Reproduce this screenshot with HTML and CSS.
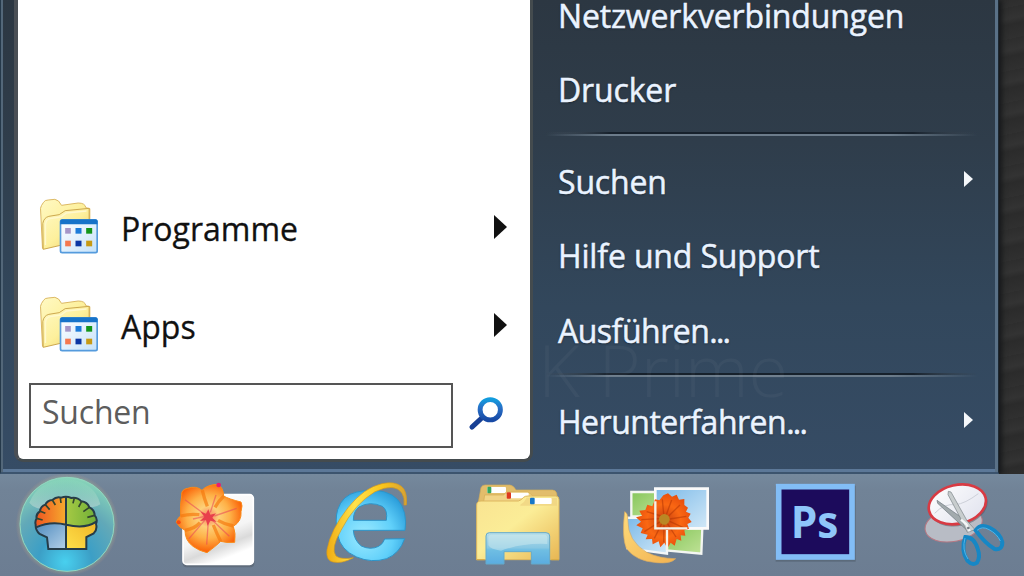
FILE: index.html
```html
<!DOCTYPE html>
<html lang="de">
  <head>
    <meta charset="utf-8">
    <title>Start</title>
    <link rel="stylesheet" href="styles.css">
  </head>
  <body>
    <svg class="defs" width="0" height="0">
      <defs>
        <linearGradient id="paper" x1="0" y1="0" x2="1" y2="1"><stop offset="0" stop-color="#fff9c4"/><stop offset=".5" stop-color="#fdf09c"/><stop offset="1" stop-color="#edc95e"/></linearGradient>
        <linearGradient id="pane" x1="0" y1="0" x2="1" y2="1"><stop offset="0" stop-color="#fff"/><stop offset="1" stop-color="#c5e2fa"/></linearGradient>
        <symbol id="folder" viewBox="115 45 185 180">
          <path d="M122 82 Q123 75 131 64 Q135 57 145 57 L165 55 Q177 56 185 73 L235 66 Q256 66 258 80 L270 83 L270 130 L182 190 L128 202Z" fill="url(#paper)" stroke="#dcb965" stroke-width="3"/>
          <path d="M130 205 L129 127 Q132 110 147 106 L178 101 L196 89 L268 82 L268 132 L182 193Z" fill="url(#paper)" stroke="#cda84e" stroke-width="3"/>
          <path d="M137 192 V130 Q139 115 151 113 L183 108 L200 96 L260 90" fill="none" stroke="#fff8cf" stroke-width="4"/>
          <rect x="182" y="117" width="110" height="98" rx="5" fill="url(#pane)" stroke="#559bdd" stroke-width="5"/>
          <path d="M181 130 V120 Q181 115 187 115 H287 Q293 115 293 121 V130Z" fill="#1673c9"/>
          <path d="M196 141h17v17h-17z" fill="#a596c8"/>
          <path d="M227 141h18v17h-18z" fill="#1c7bd9"/>
          <path d="M259 141h18v17h-18z" fill="#13951a"/>
          <path d="M196 179h17v17h-17z" fill="#f5784f"/>
          <path d="M227 179h18v17h-18z" fill="#0a36a4"/>
          <path d="M259 179h18v17h-18z" fill="#c79a15"/>
        </symbol>
      </defs>
    </svg>

    <div class="desktop">
      <div class="menu">
        <div class="programs">
          <div class="entry">
            <svg class="folder"><use href="#folder"/></svg>
            <span class="label">Programme</span>
            <span class="arrow"></span>
          </div>
          <div class="entry">
            <svg class="folder"><use href="#folder"/></svg>
            <span class="label">Apps</span>
            <span class="arrow"></span>
          </div>
          <div class="search">
            <input class="field" type="text" placeholder="Suchen">
            <svg class="lens" viewBox="110 78 110 108">
              <defs><linearGradient id="ring" x1="0" y1="0" x2="0" y2="1"><stop offset="0" stop-color="#129bdd"/><stop offset=".4" stop-color="#2870c7"/><stop offset="1" stop-color="#174aa5"/></linearGradient></defs>
              <path d="M150 146 L122 172" stroke="#173f94" stroke-width="15" stroke-linecap="round"/>
              <circle cx="178" cy="119" r="31" fill="#fff" stroke="url(#ring)" stroke-width="15"/>
            </svg>
          </div>
        </div>

        <div class="places">
          <div class="item">Netzwerkverbindungen</div>
          <div class="item">Drucker</div>
          <div class="line"></div>
          <div class="item">Suchen<span class="arrow"></span></div>
          <div class="item">Hilfe und Support</div>
          <div class="item tight"><span>Ausführen<span class="dots">...</span></span></div>
          <div class="line"></div>
          <div class="item tight"><span>Herunterfahren<span class="dots">...</span></span><span class="arrow"></span></div>
          <div class="watermark">K Prime</div>
        </div>
      </div>
    </div>

    <div class="taskbar">
      <!-- start orb -->
      <svg class="task" viewBox="-27 12 450 306">
        <defs>
          <radialGradient id="orb" cx=".48" cy=".9" r=".95"><stop offset="0" stop-color="#48d0ef"/><stop offset=".3" stop-color="#3c9fc6"/><stop offset=".62" stop-color="#62a9b8"/><stop offset="1" stop-color="#8edcb9"/></radialGradient>
          <radialGradient id="halo"><stop offset=".86" stop-color="#7ae5b5" stop-opacity=".6"/><stop offset="1" stop-color="#d4957b" stop-opacity="0"/></radialGradient>
          <linearGradient id="gloss" x1="0" y1="0" x2="0" y2="1"><stop offset="0" stop-color="#8edcba" stop-opacity=".2"/><stop offset="1" stop-color="#d5e1dc" stop-opacity=".5"/></linearGradient>
          <linearGradient id="red"><stop offset="0" stop-color="#ee4e20"/><stop offset="1" stop-color="#f6ac2e"/></linearGradient>
          <linearGradient id="green"><stop offset="0" stop-color="#a5c944"/><stop offset="1" stop-color="#6aac36"/></linearGradient>
          <linearGradient id="blue" x1="0" y1="0" x2="1" y2="1"><stop offset="0" stop-color="#4b88bd"/><stop offset="1" stop-color="#b9d4ea"/></linearGradient>
          <linearGradient id="gold" x1="0" y1="1" x2="1" y2="0"><stop offset="0" stop-color="#ffe34c"/><stop offset="1" stop-color="#eeb225"/></linearGradient>
          <clipPath id="shell"><path d="M107 164 Q104 155 110 145 Q107 132 120 124 Q121 109 136 104 Q142 91 157 90 Q170 78 184 83 Q198 77 214 84 Q232 81 244 94 Q262 96 268 112 Q284 120 284 136 Q294 146 288 162 Q293 178 281 190 L259 201 V237 H145 L141 202 L119 192 Q106 180 107 164Z"/></clipPath>
        </defs>
        <circle cx="201" cy="163" r="154" fill="url(#halo)"/>
        <circle cx="201" cy="163" r="141" fill="url(#orb)" stroke="#93d7bf" stroke-width="3"/>
        <path d="M88 98 Q115 31 201 28 Q283 34 301 103 Q273 121 200 110 Q112 130 88 98Z" fill="url(#gloss)"/>
        <g clip-path="url(#shell)">
          <path d="M100 70 H199 V165 Q151 150 108 172Z" fill="url(#red)"/>
          <path d="M199 70 H300 V155 Q255 178 199 163Z" fill="url(#green)"/>
          <path d="M100 172 Q151 150 199 163 V245 H100Z" fill="url(#blue)"/>
          <path d="M199 163 Q255 178 300 155 V245 H199Z" fill="url(#gold)"/>
        </g>
        <path d="M107 164 Q104 155 110 145 Q107 132 120 124 Q121 109 136 104 Q142 91 157 90 Q170 78 184 83 Q198 77 214 84 Q232 81 244 94 Q262 96 268 112 Q284 120 284 136 Q294 146 288 162 Q293 178 281 190 L259 201 V237 H145 L141 202 L119 192 Q106 180 107 164Z" fill="none" stroke="#263c48" stroke-width="6"/>
        <path d="M198 82 V238 M108 172 Q151 152 199 164 Q255 178 289 155" fill="none" stroke="#263c48" stroke-width="6"/>
        <path d="M110 145 L128 150 M119 123 L136 130 M136 104 L149 119 M157 90 L166 105 M181 84 L183 99 M223 84 L219 100 M245 94 L236 111 M268 112 L250 125 M284 136 L262 142" stroke="#33462f" stroke-width="5"/>
      </svg>

      <!-- flower -->
      <svg class="task" viewBox="423 12 450 306">
        <defs>
          <radialGradient id="petal" gradientUnits="userSpaceOnUse" cx="625" cy="140" r="105"><stop offset="0" stop-color="#f77962"/><stop offset=".3" stop-color="#fdd078"/><stop offset=".62" stop-color="#feb147"/><stop offset="1" stop-color="#fa6309"/></radialGradient>
          <linearGradient id="card" x1="0" y1="0" x2=".4" y2="1"><stop offset="0" stop-color="#fff"/><stop offset=".65" stop-color="#f5f5f5"/><stop offset=".83" stop-color="#dadada"/><stop offset="1" stop-color="#fff"/></linearGradient>
        </defs>
        <rect x="548" y="78" width="215" height="214" rx="12" fill="#56606d" opacity=".6"/>
        <rect x="549" y="74" width="211" height="209" rx="11" fill="url(#card)" stroke="#fff" stroke-width="5"/>
        <path d="M545 76 Q543 58 563 55 Q588 46 606 61 Q621 44 653 43 Q670 52 671 78 Q686 87 723 96 Q729 105 723 125 Q726 153 700 169 Q708 189 704 217 Q679 219 662 214 Q648 228 621 248 Q596 242 579 229 Q555 212 555 181 Q538 173 529 157 Q531 145 542 138 Q540 104 545 76Z" fill="url(#petal)" stroke="#fa8b18" stroke-width="3"/>
        <path d="M607 61 Q612 83 622 109 M671 79 Q655 94 645 112 M700 168 Q674 163 654 151 M662 214 Q650 190 640 165 M555 181 Q585 176 600 158 M542 138 Q568 131 598 134" fill="none" stroke="#f4760a" stroke-width="10" opacity=".65"/>
        <path d="M555 89 L614 133 M648 75 L631 127 M710 115 L643 138 M688 199 L637 151 M620 224 L625 153 M567 206 L614 151 M579 147 L614 139" stroke="#e94658" stroke-width="4" opacity=".55"/>
        <path d="M625 118 L631 134 L648 130 L637 143 L650 156 L631 152 L623 167 L618 151 L600 153 L613 140 L602 125 L618 131Z" fill="#e8404c"/>
        <circle cx="656" cy="45" r="7" fill="#e91d70"/>
        <circle cx="536" cy="157" r="6" fill="#f64b13"/>
      </svg>

      <!-- browser -->
      <svg class="task" viewBox="-27 12 450 306">
        <defs>
          <radialGradient id="letter" cx=".4" cy=".65" r=".7"><stop offset="0" stop-color="#9ceaff"/><stop offset=".6" stop-color="#60d0fa"/><stop offset="1" stop-color="#2b9edb"/></radialGradient>
          <linearGradient id="swoosh" x1="0" y1="0" x2="1" y2="0"><stop offset="0" stop-color="#f0ac12"/><stop offset=".35" stop-color="#ffe34b"/><stop offset=".7" stop-color="#fac51b"/><stop offset="1" stop-color="#d6a235"/></linearGradient>
        </defs>
        <path fill-rule="evenodd" d="M315 181 H160 Q162 211 184 228 Q211 241 236 229 Q249 222 254 207 L314 206 Q299 250 260 266 Q214 280 170 261 Q122 240 113 195 Q104 149 113 119 Q127 76 170 66 Q231 51 276 75 Q315 99 317 156Z M160 151 H259 Q264 120 247 109 Q210 92 177 111 Q160 123 160 151Z" fill="url(#letter)" stroke="#2e94c8" stroke-width="3"/>
        <path d="M319 105 Q323 64 304 49 Q284 33 246 41 Q193 52 144 113 Q92 179 81 239 Q77 272 99 276 Q126 282 160 263 Q124 270 108 258 Q91 236 123 181 Q164 101 225 65 Q285 37 306 70 Q315 83 312 105Z" fill="url(#swoosh)" stroke="#d99a17" stroke-width="2"/>
      </svg>

      <!-- file manager -->
      <svg class="task" viewBox="423 12 450 306">
        <defs>
          <linearGradient id="front" x1="0" y1="0" x2="1" y2="1"><stop offset="0" stop-color="#f9e391"/><stop offset=".45" stop-color="#fbed97"/><stop offset="1" stop-color="#e8b653"/></linearGradient>
          <linearGradient id="stand" x1="0" y1="0" x2="0" y2="1"><stop offset="0" stop-color="#b8dee9"/><stop offset=".48" stop-color="#88c8e3"/><stop offset=".55" stop-color="#6fbee3"/><stop offset="1" stop-color="#5aace0"/></linearGradient>
        </defs>
        <path d="M536 91 L543 53 Q546 45 555 45 H630 Q641 47 648 60 H757 Q767 60 770 70 L775 112 H533Z" fill="#e2bd6b" stroke="#d2ac58" stroke-width="2"/>
        <rect x="561" y="51" width="57" height="18" rx="3" fill="#fff"/>
        <rect x="562" y="50" width="12" height="20" rx="3" fill="#36a65d"/>
        <path d="M554 75 H611 L619 66 H684 L704 82 V103 H550Z" fill="#f1d487" stroke="#d5ac53" stroke-width="2"/>
        <rect x="620" y="68" width="66" height="17" rx="3" fill="#fff"/>
        <rect x="620" y="67" width="13" height="19" rx="3" fill="#dd3a1d"/>
        <path d="M530 105 Q530 93 543 93 H655 Q663 91 671 82 Q675 78 684 78 H768 Q777 79 777 89 V269 H530Z" fill="url(#front)" stroke="#ddb75e" stroke-width="3"/>
        <path d="M661 104 Q675 95 680 83 H771 V107 H661Z" fill="#eed180" opacity=".7"/>
        <rect x="690" y="84" width="65" height="18" rx="3" fill="#fff"/>
        <rect x="690" y="83" width="14" height="20" rx="3" fill="#1777c7"/>
        <path d="M558 282 V198 Q558 188 568 188 H738 Q749 188 749 198 V282 H694 V245 H612 V282Z" fill="url(#stand)" stroke="#65aacb" stroke-width="3"/>
        <path d="M565 226 V200 Q567 194 575 194 H733 Q742 195 742 205 V222 Q670 218 603 242 Q573 239 565 226Z" fill="#d5edf0" opacity=".45"/>
        <path d="M530 269 h24 M754 269 h23" stroke="#d8ac48" stroke-width="4"/>
      </svg>

      <!-- photo gallery -->
      <svg class="task" viewBox="-27 12 450 306">
        <defs>
          <linearGradient id="sky" x1="0" y1="0" x2="1" y2="1"><stop offset="0" stop-color="#7bb9e8"/><stop offset="1" stop-color="#d1e8f7"/></linearGradient>
          <linearGradient id="grass" x1="0" y1="0" x2="1" y2="1"><stop offset="0" stop-color="#86c65b"/><stop offset="1" stop-color="#c0e297"/></linearGradient>
          <radialGradient id="bloom" cx=".5" cy=".5" r=".55"><stop offset="0" stop-color="#b98519"/><stop offset=".2" stop-color="#d84c10"/><stop offset=".55" stop-color="#fa6813"/><stop offset="1" stop-color="#e54a0b"/></radialGradient>
          <linearGradient id="band" x1="0" y1="0" x2="1" y2="1"><stop offset="0" stop-color="#ffdb7a"/><stop offset="1" stop-color="#f2b251"/></linearGradient>
        </defs>
        <path d="M202 177 L307 174 L304 251 L200 241Z" fill="url(#grass)" stroke="#f4f6f2" stroke-width="7"/>
        <path d="M94 66 H187 V139 H94Z" fill="url(#grass)" stroke="#f4f6f2" stroke-width="7"/>
        <path d="M80 143 L201 146 V251 L82 235Z" fill="url(#sky)" stroke="#f3f7f9" stroke-width="7"/>
        <path d="M166 56 H323 V175 H166Z" fill="url(#sky)" stroke="#fafafa" stroke-width="8"/>
        <path d="M190 76 L204 70 L216 80 L230 74 L237 89 L253 87 L253 105 L264 113 L258 125 L272 131 L265 143 L275 156 L262 162 L267 176 L253 181 L256 197 L242 196 L244 212 L230 207 L224 227 L212 218 L202 235 L193 218 L181 232 L176 214 L158 223 L156 207 L137 208 L143 194 L122 189 L128 175 L109 166 L123 155 L108 142 L126 137 L118 122 L136 120 L142 104 L157 109 L165 88 L178 91Z" fill="url(#bloom)"/>
        <path d="M191 132 L187 88 M199 134 L215 90 M206 138 L240 105 M209 147 L259 139 M209 154 L255 175 M202 160 L228 201 M192 161 L191 217 M186 159 L163 205 M182 154 L133 185 M181 146 L124 149 M183 138 L140 125" stroke="#ad3305" stroke-width="4" opacity=".5"/>
        <circle cx="193" cy="148" r="16" fill="#ba8724"/>
        <path d="M166 94 V175 H262 M201 180 V240" fill="none" stroke="#f5f2e9" stroke-width="7"/>
        <path d="M74 125 Q84 129 83 149 Q83 213 140 247 Q178 266 227 266 Q213 282 170 278 Q107 274 79 235 Q65 201 74 125Z" fill="url(#band)" stroke="#d9aa60" stroke-width="2"/>
      </svg>

      <!-- image editor -->
      <svg class="task" viewBox="423 12 450 306">
        <rect x="527" y="47" width="240" height="228" fill="#4e5b68" opacity=".55"/>
        <rect x="536" y="50" width="220" height="211" fill="#1c0b5c" stroke="#82bdf6" stroke-width="17"/>
        <text class="ps" x="572" y="203" textLength="143" lengthAdjust="spacingAndGlyphs">Ps</text>
      </svg>

      <!-- snipping tool -->
      <svg class="task" viewBox="93 102 450 306">
        <defs>
          <linearGradient id="oval" x1="0" y1="0" x2="1" y2="1"><stop offset="0" stop-color="#fff"/><stop offset="1" stop-color="#dfe1ed"/></linearGradient>
        </defs>
        <ellipse cx="281" cy="254" rx="87" ry="50" transform="rotate(-12 281 254)" fill="#b8bcc5" stroke="#b77883" stroke-width="3"/>
        <ellipse cx="295" cy="198" rx="89" ry="60" transform="rotate(-13 295 198)" fill="#4e5360" opacity=".5"/>
        <ellipse cx="292" cy="193" rx="87" ry="58" transform="rotate(-13 292 193)" fill="url(#oval)" stroke="#d83a43" stroke-width="8"/>
        <path d="M224 220 Q252 190 287 194 Q315 191 355 161" fill="none" stroke="#cdd0d9" stroke-width="3"/>
        <path d="M231 181 L324 246 L334 268 L319 269 L233 190Z" fill="#a2aaad" stroke="#6e7880" stroke-width="2"/>
        <path d="M265 154 L273 156 L321 242 L345 269 L322 277 L305 241 L264 164Z" fill="#c8cdce" stroke="#788287" stroke-width="2"/>
        <path d="M303 239 L319 253 L329 274" stroke="#f4f6f7" stroke-width="7" fill="none"/>
        <path d="M347 271 Q361 250 388 263 Q420 279 427 307 Q427 331 404 327 Q375 310 347 271Z M316 291 Q342 291 353 326 Q362 352 351 368 Q337 378 323 363 Q301 333 316 291Z" fill="none" stroke="#1687c5" stroke-width="12"/>
        <path d="M351 271 Q367 257 387 269 Q411 281 421 303 M315 294 Q305 329 324 357" fill="none" stroke="#51b4e8" stroke-width="3"/>
        <circle cx="325" cy="264" r="4" fill="#747b83"/>
      </svg>
    </div>
  </body>
</html>
```

FILE: styles.css
```css
body {
  margin: 0;
  width: 1024px;
  height: 576px;
  overflow: hidden;
  font-family: "Open Sans", "Noto Sans", sans-serif;
  font-size: 32px;
}
.defs {
  display: block;
}
.desktop {
  height: 474px;
  background: repeating-linear-gradient(168deg, #2d2d2d 0px, #333 11px, #2b2b2b 17px, #303030 31px);
}
.menu {
  box-sizing: border-box;
  display: flex;
  width: 999px;
  height: 474px;
  padding-left: 13px;
  background: linear-gradient(#2c3742, #2f3d4b 30%, #32475c 65%, #364c65);
  border-left: 1px solid #25394a;
  border-right: 1px solid #1d2933;
  border-bottom: 2px solid #3c546e;
  box-shadow: inset 2px 0 #536779, inset -3px 0 #5a7187, inset 0 -3px #5c7898, 3px 0 5px #17191b;
}
.programs {
  box-sizing: border-box;
  width: 519px;
  height: 462px;
  padding-top: 179px;
  background: #fff;
  border: solid #444b4e;
  border-width: 0 3px 3px 4px;
  border-left-color: #4a4f55;
  border-radius: 0 0 9px 9px;
}
.entry {
  display: flex;
  align-items: center;
  height: 98px;
  padding: 0 23px 0 20px;
  color: #111;
}
.folder {
  width: 62px;
  height: 60px;
  margin-top: -5px;
}
.label {
  flex: 1;
  margin-left: 21px;
  white-space: nowrap;
  -webkit-text-stroke: .3px;
}
.arrow {
  border-style: solid;
  border-color: transparent;
  border-width: 12px 0 12px 13px;
  border-left-color: #111;
}
.entry .arrow {
  margin-top: -3px;
}
.search {
  display: flex;
  padding: 8px 0 0 11px;
}
.field {
  box-sizing: border-box;
  width: 424px;
  height: 65px;
  padding: 0 11px 9px;
  font: inherit;
  letter-spacing: -.2px;
  border: 2px solid #555;
  outline: none;
}
.field::placeholder {
  color: #5d5d5d;
  opacity: 1;
}
.lens {
  width: 36px;
  height: 36px;
  margin: 13px 0 0 15px;
}
.places {
  position: relative;
  width: 431px;
  height: 474px;
  margin: -22px 0 0 13px;
  color: #eaf3ff;
}
.item {
  display: flex;
  align-items: center;
  justify-content: space-between;
  height: 74.5px;
  padding: 0 4px 0 12px;
  white-space: nowrap;
  letter-spacing: -.15px;
  text-shadow: 0 1px 2px #1a2633;
  -webkit-text-stroke: .5px;
}
.tight {
  letter-spacing: -.5px;
}
.dots {
  letter-spacing: -1.8px;
}
.item .arrow {
  border-width: 8px 0 8px 9px;
  border-left-color: #f4f7fa;
  margin-top: -4px;
}
.line {
  height: 2px;
  margin: 5px 0 8px;
  border-top: 2px solid;
  border-image: linear-gradient(90deg, transparent, #17212c 15%, #17212c 85%, transparent) 1;
  background: linear-gradient(90deg, transparent, #6c7c8b 15%, #6c7c8b 80%, transparent);
}
.watermark {
  position: absolute;
  left: -8px;
  top: 342px;
  font-weight: 300;
  font-size: 72px;
  color: #fff;
  opacity: .03;
}
.taskbar {
  display: flex;
  height: 102px;
  background: linear-gradient(#75899d, #718397 15%, #6c7d92);
}
.task {
  flex: none;
  width: 150px;
  height: 102px;
}
.task:first-child {
  margin-left: -9px;
}
.ps {
  font: bold 135px "Open Sans", sans-serif;
  fill: #8fc6fa;
}
```
